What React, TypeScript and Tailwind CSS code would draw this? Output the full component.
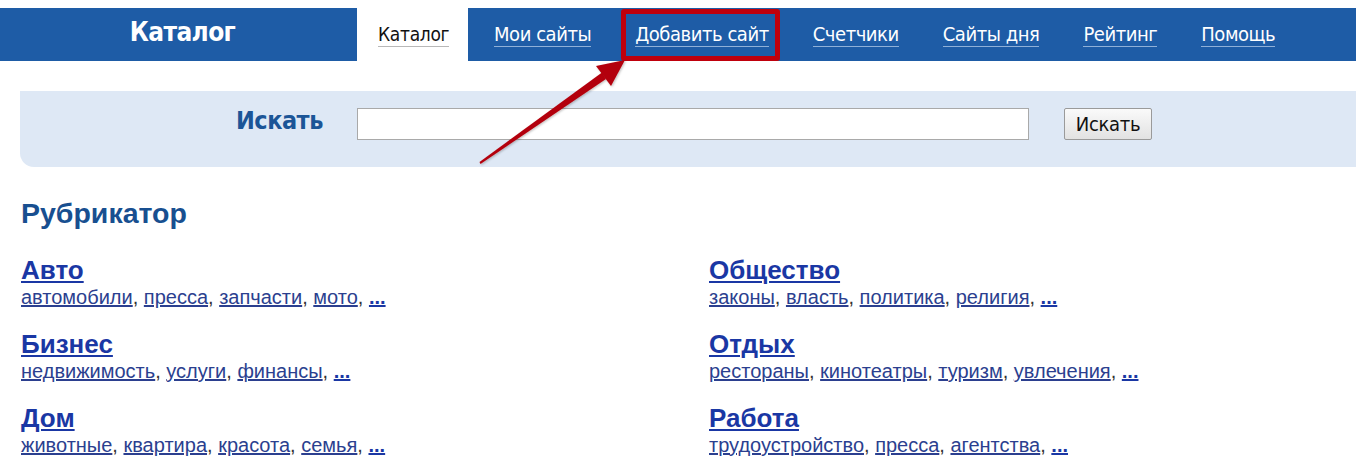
import React from 'react';

const narrow = { fontFamily: '"Liberation Sans Narrow", "DejaVu Sans Condensed", "Liberation Sans", sans-serif' };

const navItems = ['Мои сайты', 'Добавить сайт', 'Счетчики', 'Сайты дня', 'Рейтинг', 'Помощь'];

const rubrics = [
  { title: 'Авто', subs: ['автомобили', 'пресса', 'запчасти', 'мото'] },
  { title: 'Общество', subs: ['законы', 'власть', 'политика', 'религия'] },
  { title: 'Бизнес', subs: ['недвижимость', 'услуги', 'финансы'] },
  { title: 'Отдых', subs: ['рестораны', 'кинотеатры', 'туризм', 'увлечения'] },
  { title: 'Дом', subs: ['животные', 'квартира', 'красота', 'семья'] },
  { title: 'Работа', subs: ['трудоустройство', 'пресса', 'агентства'] },
];

const App: React.FC = () => {
  return (
    <div className="relative w-[1356px] h-[462px] overflow-hidden bg-white font-['Liberation_Sans',Arial,sans-serif]">
      {/* Header */}
      <div className="mt-2 flex h-[53px]">
        <div className="flex w-[357px] items-center justify-center bg-[#1e5ca6] pb-1 pl-2">
          <span style={narrow} className="text-[26px] font-bold tracking-[-0.6px] text-white">Каталог</span>
        </div>
        <div className="flex w-[111px] items-center bg-white pl-[21px]">
          <span style={narrow} className="border-b border-[#b8b8b8] text-[19px] leading-[24px] tracking-[-0.3px] text-[#111]">Каталог</span>
        </div>
        <div className="flex flex-1 items-center gap-[44px] bg-[#1e5ca6] pl-[26px]">
          {navItems.map((item) => (
            <span key={item} className="relative">
              <span style={narrow} className="border-b border-[#8fb0d8] text-[20px] leading-[24px] tracking-[-0.45px] text-white">{item}</span>
              {item === 'Добавить сайт' && (
                <span className="absolute -left-[14px] -right-[11px] -top-[13px] -bottom-[13px] rounded-[3px] border-[5px] border-[#c0000c]" />
              )}
            </span>
          ))}
        </div>
      </div>

      {/* Search */}
      <div className="ml-5 mt-[30px] flex h-[76px] items-start rounded-bl-[14px] bg-[#dee8f5] pl-[216px] pt-[17px]">
        <span style={narrow} className="mt-[-3px] w-[86px] text-[25px] font-bold leading-[32px] tracking-[-0.5px] text-[#1b5597]">Искать</span>
        <input className="ml-[35px] h-[32px] w-[672px] border border-[#a9a9a9] bg-white" />
        <button
          style={narrow}
          className="ml-[35px] h-[32px] w-[88px] rounded-[2px] border border-[#9a9a9a] bg-gradient-to-b from-[#fafafa] to-[#e2e2e2] text-[20px] tracking-[-0.3px] text-[#111]"
        >
          Искать
        </button>
      </div>

      {/* Rubricator */}
      <div className="pl-[21px] pt-[29px]">
        <h2 className="text-[28.5px] font-bold leading-[34px] text-[#184f90]">Рубрикатор</h2>
        <div className="mt-[26px] grid grid-cols-[688px_1fr] gap-y-[22px]">
          {rubrics.map((r) => (
            <div key={r.title}>
              <a className="text-[26px] font-bold leading-[28px] text-[#1a37a4] underline decoration-2 underline-offset-2">{r.title}</a>
              <div className="text-[20px] leading-[22px] text-[#333]">
                {r.subs.map((s) => (
                  <React.Fragment key={s}>
                    <a className="text-[#2b3f8f] underline">{s}</a>,{' '}
                  </React.Fragment>
                ))}
                <a className="font-bold text-[#1a37a4] underline">...</a>
              </div>
            </div>
          ))}
        </div>
      </div>

      {/* Arrow */}
      <svg className="pointer-events-none absolute left-0 top-0" width="1356" height="462">
        <defs>
          <filter id="sh" x="-10%" y="-10%" width="120%" height="120%">
            <feDropShadow dx="1" dy="1" stdDeviation="1" floodColor="#000" floodOpacity="0.25" />
          </filter>
        </defs>
        <g filter="url(#sh)" fill="#b3000c">
          <polygon points="479.5,162 602,72.5 606,79 480.5,164" />
          <polygon points="625,60 596,66 611,86" />
        </g>
      </svg>
    </div>
  );
};

export default App;
